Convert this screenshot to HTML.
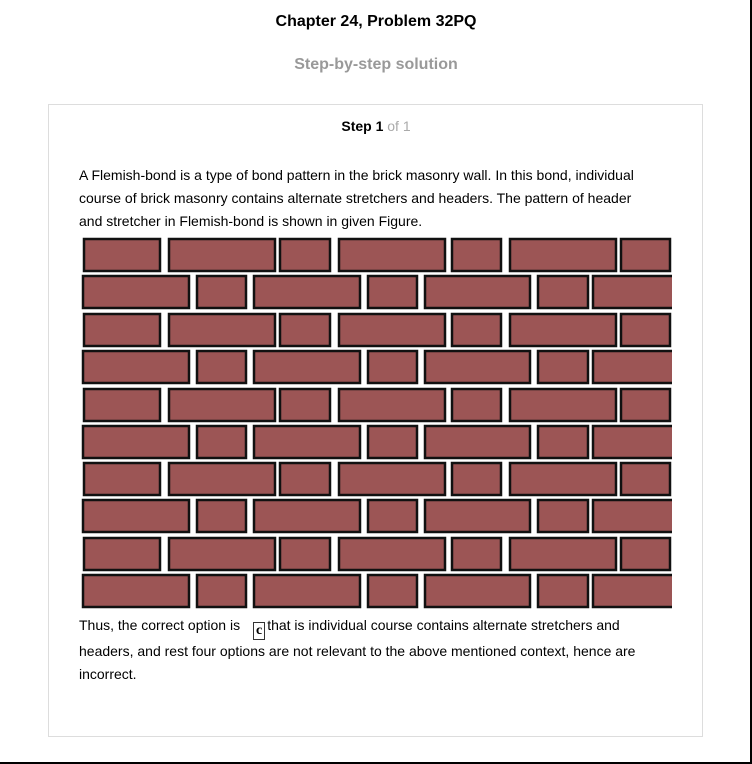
<!DOCTYPE html>
<html><head><style>
html,body{margin:0;padding:0;background:#fff;}
body{width:752px;height:764px;position:relative;overflow:hidden;font-family:"Liberation Sans",Arial,sans-serif;}
.frame{position:absolute;left:-2px;top:-2px;width:752px;height:764px;border-right:2px solid #000;border-bottom:2px solid #000;}
h1{position:absolute;top:13px;left:0;width:752px;text-align:center;font-size:16px;font-weight:bold;margin:0;color:#000;}
h2{position:absolute;top:56px;left:0;width:752px;text-align:center;font-size:16px;font-weight:bold;margin:0;color:#999;}
.card{position:absolute;left:48px;top:104px;width:653px;height:631px;border:1px solid #ddd;}
.step{position:absolute;top:118px;left:0;width:752px;text-align:center;font-size:14px;}
.step b{color:#000}.step span{color:#aaa}
p{position:absolute;left:79px;width:575px;margin:0;font-size:14px;line-height:23px;color:#000;}
.c{display:inline-block;border:1px solid #333;font-family:"Liberation Serif",serif;font-weight:bold;font-size:14px;line-height:16px;padding:0 2px;vertical-align:-4px;margin:0 2px 0 9px;}
svg{position:absolute;left:0;top:0;}
</style></head><body>
<div class="frame"></div>
<h1>Chapter 24, Problem 32PQ</h1>
<h2>Step-by-step solution</h2>
<div class="card"></div>
<div class="step"><b>Step 1</b> <span>of 1</span></div>
<p style="top:164px">A Flemish-bond is a type of bond pattern in the brick masonry wall. In this bond, individual course of brick masonry contains alternate stretchers and headers. The pattern of header and stretcher in Flemish-bond is shown in given Figure.</p>
<svg width="672" height="764" viewBox="0 0 672 764">
<defs>
<g id="a" fill="#9c5555" stroke="#111" stroke-width="2.5">
<rect x="84" y="0" width="76" height="32"/><rect x="169" y="0" width="106" height="32"/><rect x="280" y="0" width="50" height="32"/><rect x="339" y="0" width="106" height="32"/><rect x="452" y="0" width="49" height="32"/><rect x="510" y="0" width="106" height="32"/><rect x="621" y="0" width="49" height="32"/>
</g>
<g id="b" fill="#9c5555" stroke="#111" stroke-width="2.5">
<rect x="83" y="0" width="106" height="32"/><rect x="197" y="0" width="49" height="32"/><rect x="254" y="0" width="106" height="32"/><rect x="368" y="0" width="49" height="32"/><rect x="425" y="0" width="105" height="32"/><rect x="538" y="0" width="50" height="32"/><rect x="593" y="0" width="90" height="32"/>
</g>
</defs>
<use href="#a" y="239"/><use href="#b" y="276"/>
<use href="#a" y="314"/><use href="#b" y="351"/>
<use href="#a" y="389"/><use href="#b" y="426"/>
<use href="#a" y="463"/><use href="#b" y="500"/>
<use href="#a" y="538"/><use href="#b" y="575"/>
</svg>
<p style="top:614px">Thus, the correct option is <span class="c">c</span>that is individual course contains alternate stretchers and headers, and rest four options are not relevant to the above mentioned context, hence are incorrect.</p>
</body></html>
